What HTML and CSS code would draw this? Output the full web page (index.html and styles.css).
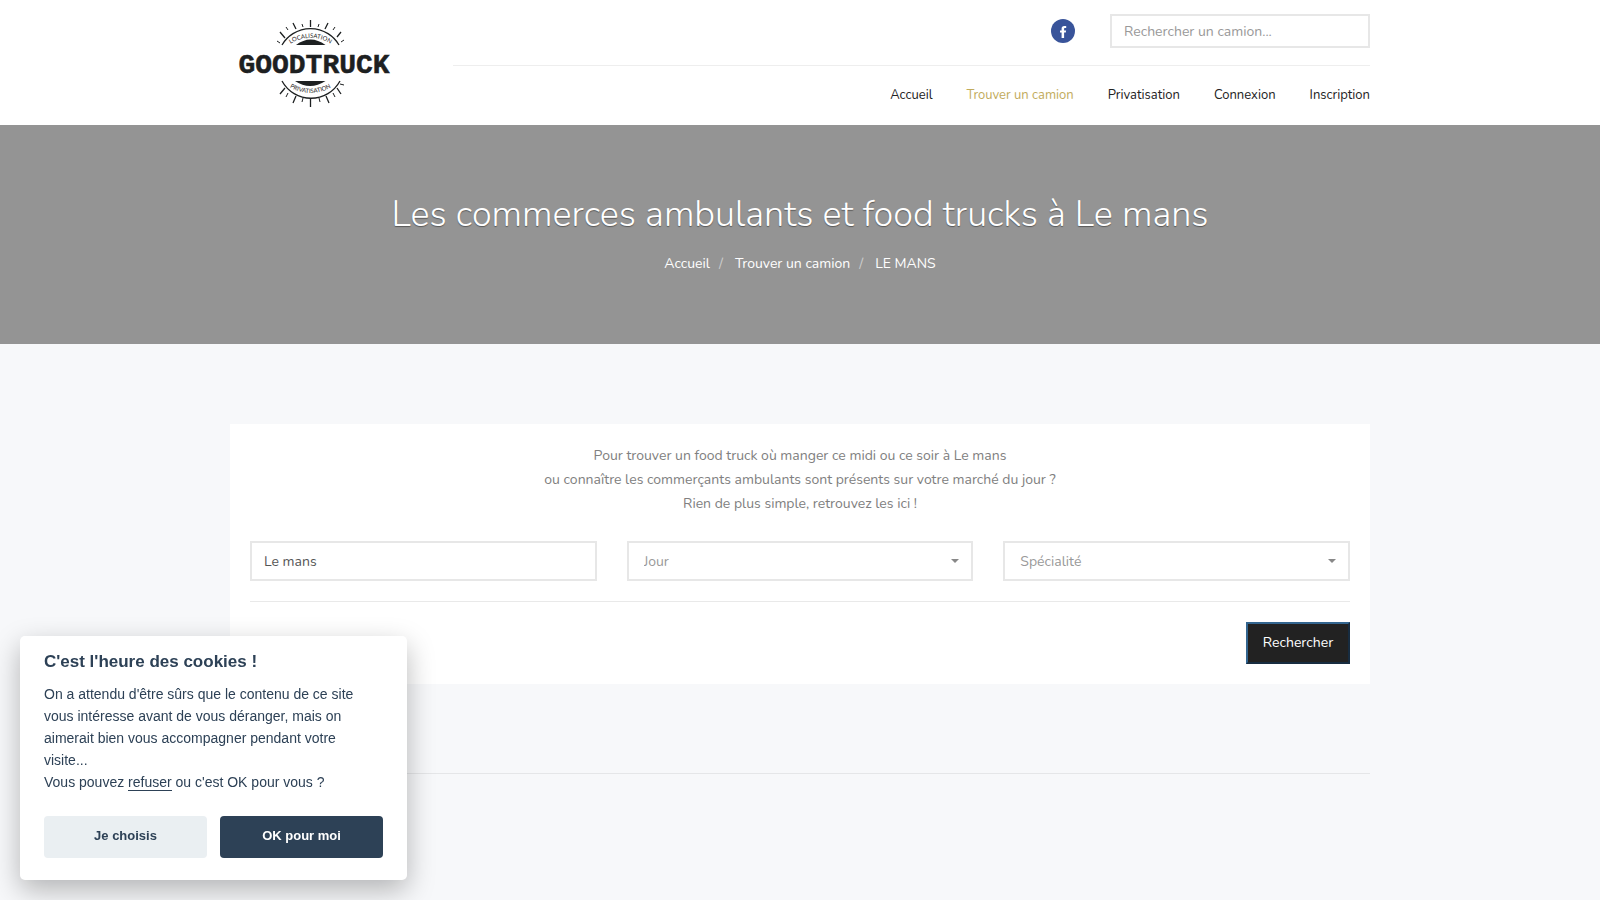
FILE: index.html
```html
<!DOCTYPE html>
<html lang="fr">
<head>
    <meta charset="utf-8">
    <meta name="viewport" content="width=device-width, initial-scale=1.0">
    <title>Les commerces ambulants et food trucks à Le mans - GoodTruck</title>
    <link rel="stylesheet" href="styles.css">
</head>
<body>
    <header>
        <div class="container header-row">
            <a class="logo" href="#" aria-label="GoodTruck">
                <svg width="165" height="96" viewBox="10 16 165 96">
                    <defs>
                        <path id="arc-top" d="M65 48 A37 37 0 0 1 116 48"/>
                        <path id="arc-bottom" d="M62 81 A40 40 0 0 0 119 81"/>
                    </defs>
                    <!-- rayons -->
                    <g fill="none" stroke="#1d2021" stroke-width="1.3">
                        <path d="M62 45 A33 33 0 0 1 119 45 M62 81 A33 33 0 0 0 120 81"/>
                        <path d="M90.5 20v7M108 23l-3 6M121 32l-4 5M73 23l3 6M60 32l5 6M90.5 98v9M106 96l3 7M117 88l4 6M76 96l-3 7M65 88l-5 6"/>
                        <path stroke-width="1" d="M99 24l-1 3M82 24l1 3M115 27l-2 3M66 27l2 3M124 40l-3 2M57 41l3 2M99 98l1 4M83 98l-1 4M113 93l2 4M68 93l-2 4M120 84l4 1"/>
                    </g>
                    <path fill="#1d2021" d="M76 45q14.500-11 29.500 0zM75 81q15 10 30.500 0z"/>
                    <text class="logo-small" text-anchor="middle"><textPath href="#arc-top" startOffset="50%">LOCALISATION</textPath></text>
                    <text class="logo-small" text-anchor="middle"><textPath href="#arc-bottom" startOffset="50%">PRIVATISATION</textPath></text>
                    <text class="logo-name" x="94" y="73" text-anchor="middle">GOODTRUCK</text>
                </svg>
            </a>
            <div class="header-right">
                <div class="header-top">
                    <a class="facebook" href="#" aria-label="Facebook">
                        <svg width="24" height="24" viewBox="0 0 24 24">
                            <circle cx="12" cy="12" r="12" fill="#39549a"/>
                            <path fill="#fff" d="M10.600 19v-5.500H9v-2h1.600V9.800C10.600 8 11.500 7 13.200 7h2v2h-1.200c-.7 0-.9.3-.9.9v1.600h2l-.3 2h-1.700V19z"/>
                        </svg>
                    </a>
                    <input type="text" class="search" placeholder="Rechercher un camion..." aria-label="Rechercher un camion">
                </div>
                <nav>
                    <a href="#">Accueil</a>
                    <a href="#" class="active">Trouver un camion</a>
                    <a href="#">Privatisation</a>
                    <a href="#">Connexion</a>
                    <a href="#">Inscription</a>
                </nav>
            </div>
        </div>
    </header>

    <section class="page-header">
        <h1>Les commerces ambulants et food trucks à Le mans</h1>
        <ul class="breadcrumb">
            <li><a href="#">Accueil</a></li>
            <li><a href="#">Trouver un camion</a></li>
            <li>LE MANS</li>
        </ul>
    </section>

    <main class="container">
        <form class="box">
            <p>Pour trouver un food truck où manger ce midi ou ce soir à Le mans<br>
            ou connaître les commerçants ambulants sont présents sur votre marché du jour ?<br>
            Rien de plus simple, retrouvez les ici !</p>
            <div class="fields">
                <input type="text" value="Le mans" aria-label="Ville">
                <div class="select">
                    <select aria-label="Jour">
                        <option>Jour</option>
                    </select>
                </div>
                <div class="select">
                    <select aria-label="Spécialité">
                        <option>Spécialité</option>
                    </select>
                </div>
            </div>
            <div class="actions">
                <button type="button" class="btn-search">Rechercher</button>
            </div>
        </form>
        <hr>
    </main>

    <div class="cookies">
        <h2>C'est l'heure des cookies !</h2>
        <p>On a attendu d'être sûrs que le contenu de ce site vous intéresse avant de vous déranger, mais on aimerait bien vous accompagner pendant votre visite...<br>
        Vous pouvez <a href="#">refuser</a> ou c'est OK pour vous ?</p>
        <div class="cookies-buttons">
            <button type="button">Je choisis</button>
            <button type="button" class="accept">OK pour moi</button>
        </div>
    </div>
</body>
</html>
```
FILE: styles.css
```css
* {
    box-sizing: border-box;
}
body {
    margin: 0;
    background: #f7f8fa;
    font-family: Nunito, Lato, sans-serif;
    font-size: 14px;
    line-height: 24px;
    color: #808080;
}
a {
    color: inherit;
    text-decoration: none;
}
input, select, button {
    font-family: inherit;
    font-size: 14px;
}
.container {
    max-width: 1140px;
    margin: 0 auto;
}

/* En-tête */
header {
    background: #fff;
}
.header-row {
    display: flex;
    justify-content: space-between;
}
.logo {
    padding-top: 16px;
}
.logo svg {
    display: block;
}
.logo-name {
    font-family: "Liberation Mono", monospace;
    font-size: 28px;
    font-weight: bold;
    fill: #1d2021;
    stroke: #1d2021;
    stroke-width: 0.5;
}
.logo-small {
    font-family: Lato, sans-serif;
    font-size: 6px;
    fill: #1d2021;
}
.header-right {
    width: 81%;
    max-width: 917px;
}
.header-top {
    display: flex;
    justify-content: flex-end;
    align-items: center;
    gap: 35px;
    padding: 14px 0 17px;
    border-bottom: 1px solid #eee;
}
.facebook svg {
    display: block;
}
.search {
    width: 260px;
    height: 34px;
    padding: 0 12px;
    border: 2px solid #e7e7e7;
}
::placeholder {
    color: #999;
}
nav {
    display: flex;
    justify-content: flex-end;
    gap: 34px;
    padding: 17px 0 18px;
    font-size: 13px;
    color: #222;
}
nav .active {
    color: #c2ab5c;
}

/* Bandeau titre */
.page-header {
    background: #949494;
    color: #fff;
    text-align: center;
    padding: 65px 0 68px;
}
h1 {
    margin: 0;
    font-size: 36px;
    font-weight: 300;
    line-height: 50px;
    text-shadow: 0 1px 1px rgba(0, 0, 0, 0.4);
}
.breadcrumb {
    display: flex;
    justify-content: center;
    list-style: none;
    margin: 12px 0 0;
    padding: 0;
}
.breadcrumb li + li::before {
    content: "/";
    padding: 0 12px 0 9px;
    color: #ccc;
}

/* Recherche */
main {
    padding-top: 80px;
}
.box {
    background: #fff;
    padding: 20px;
}
.box p {
    margin: 0 0 25px;
    text-align: center;
}
.fields {
    display: grid;
    grid-template-columns: 1fr 1fr 1fr;
    gap: 30px;
    padding-bottom: 20px;
    border-bottom: 1px solid #e9e9e9;
}
.fields input, .fields select {
    width: 100%;
    height: 40px;
    padding: 0 12px;
    border: 2px solid #e7e7e7;
    border-radius: 0;
    background: #fff;
    color: #555;
}
.select {
    position: relative;
}
.fields select {
    appearance: none;
    padding: 0 15px;
    color: #999;
}
.select::after {
    content: "";
    position: absolute;
    right: 14px;
    top: 18px;
    border: 4px solid transparent;
    border-top-color: #888;
    border-bottom: 0;
}
.actions {
    display: flex;
    justify-content: flex-end;
    padding-top: 20px;
}
.btn-search {
    width: 104px;
    height: 42px;
    padding: 0 0 2px;
    border: 2px solid;
    border-color: #33658f #172c40 #172c40 #33658f;
    background: #222;
    color: #fff;
}
hr {
    margin: 89px 0 0;
    border: 0;
    border-top: 1px solid #e5e6e8;
}

/* Cookies */
.cookies {
    position: fixed;
    left: 20px;
    bottom: 20px;
    width: 387px;
    padding: 13px 24px 22px;
    border-radius: 5px;
    background: #fff;
    box-shadow: 0 10px 28px rgba(2, 2, 3, 0.28);
    font-family: "Liberation Sans", Arial, sans-serif;
    color: #2d4156;
}
.cookies h2 {
    margin: 0;
    font-size: 17px;
    line-height: 26px;
}
.cookies p {
    margin: 8px 0 23px;
    font-size: 14px;
    line-height: 22px;
}
.cookies p a {
    border-bottom: 1px solid #2d4156;
}
.cookies-buttons {
    display: grid;
    grid-template-columns: 1fr 1fr;
    gap: 13px;
}
.cookies button {
    height: 42px;
    padding: 0 0 3px;
    border: 0;
    border-radius: 4px;
    background: #eaeff2;
    color: #2d4156;
    font-size: 13px;
    font-weight: bold;
}
.cookies .accept {
    background: #2d4156;
    color: #fff;
}
```
